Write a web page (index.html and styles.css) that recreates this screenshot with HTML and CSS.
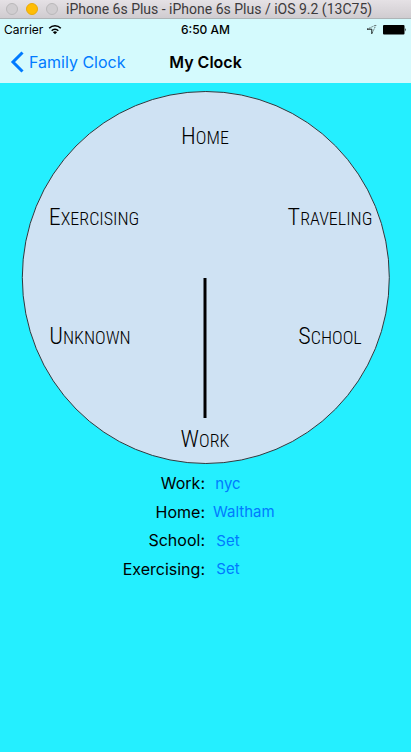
FILE: index.html
```html
<!DOCTYPE html>
<html lang="en">
<head>
<meta charset="utf-8">
<meta name="viewport" content="width=device-width, initial-scale=1">
<title>My Clock</title>
<link rel="stylesheet" href="styles.css">
</head>
<body>
<div class="titlebar">
  <div class="lights"><span class="light"></span><span class="light light-min"></span><span class="light"></span></div>
  <div class="window-title">iPhone 6s Plus - iPhone 6s Plus / iOS 9.2 (13C75)</div>
</div>
<header class="top">
  <div class="status">
    <div class="carrier">
      <span>Carrier</span>
      <svg width="14" height="11" viewBox="0 0 14 11" fill="none" stroke="#000" stroke-width="1.5"><path d="M1.2 4.2C4.4 .8 9.6 .8 12.8 4.2M3.7 6.7C5.500 4.700 8.500 4.700 10.300 6.700"/><path d="M7 10.200L4.900 8.200Q7 6.500 9.100 8.200Z" fill="#000" stroke="none"/></svg>
    </div>
    <time class="time">6:50 AM</time>
    <div class="indicators">
      <svg width="11" height="11" viewBox="0 0 11 11" fill="none" stroke="#000"><path stroke-width=".9" d="M1 5.200H5.800V10"/><path stroke-width=".7" stroke-dasharray="1 1" d="M1 5.200L10 1L5.800 10"/></svg>
      <svg width="24" height="10" viewBox="0 0 24 10"><rect x="0" y="0" width="21.500" height="9.500" rx="1"/><path d="M22.300 3Q23.800 4.700 22.300 6.500Z"/></svg>
    </div>
  </div>
  <nav class="nav">
    <a class="back" href="#">
      <svg width="14" height="22" viewBox="0 0 14 22" fill="none" stroke="#007aff" stroke-width="3"><path d="M12.500 1.500L3 11L12.500 20.500"/></svg>
      <span>Family Clock</span>
    </a>
    <h1 class="title">My Clock</h1>
  </nav>
</header>
<main>
  <svg class="clock" viewBox="0 0 411 382" role="img" aria-label="Family clock">
    <ellipse class="face" cx="205.800" cy="194.500" rx="183.500" ry="186"/>
    <line class="hand" x1="205" y1="195" x2="205" y2="335"/>
    <g class="places">
      <text x="205" y="61"><tspan class="cap">H</tspan>ome</text>
      <text x="94" y="142"><tspan class="cap">E</tspan>xercising</text>
      <text x="330" y="142"><tspan class="cap">T</tspan>raveling</text>
      <text x="90" y="261"><tspan class="cap">U</tspan>nknown</text>
      <text x="330" y="261"><tspan class="cap">S</tspan>chool</text>
      <text x="205" y="364"><tspan class="cap">W</tspan>ork</text>
    </g>
  </svg>
  <div class="settings">
    <label for="work">Work:</label><button id="work">nyc</button>
    <label for="home">Home:</label><button id="home">Waltham</button>
    <label for="school">School:</label><button id="school">Set</button>
    <label for="exercising">Exercising:</label><button id="exercising">Set</button>
  </div>
</main>
</body>
</html>
```
FILE: styles.css
```css
* { box-sizing: border-box; }
body {
  margin: 0;
  min-height: 100vh;
  background: #24efff;
  color: #000;
  font-family: Inter, "Liberation Sans", sans-serif;
}
svg { display: block; flex: none; }
.titlebar {
  display: flex;
  align-items: center;
  height: 19px;
  padding: 0 6px;
  gap: 8px;
  background: linear-gradient(#e5e1e5, #d0ccd0);
  border-bottom: 1px solid #aeb4b6;
}
.lights { display: flex; gap: 8px; }
.light {
  width: 12px;
  height: 12px;
  border-radius: 50%;
  background: #d0cdd0;
  border: 1px solid #bab8ba;
}
.light-min { background: #ffbd05; border-color: #e9aa08; }
.window-title {
  font-family: Roboto, sans-serif;
  font-size: 14px;
  line-height: 18px;
  color: #3c3a3c;
  white-space: nowrap;
}
.top { background: #d4fafd; }
.status, .nav {
  display: grid;
  grid-template-columns: 1fr auto 1fr;
  align-items: center;
}
.status { height: 21px; padding: 0 4px; font-size: 12px; }
.carrier { display: flex; align-items: center; gap: 5px; }
.time { font-weight: 500; }
.indicators { display: flex; justify-content: flex-end; align-items: center; gap: 6px; }
.nav { height: 43px; padding: 0 10px; }
.back {
  display: flex;
  align-items: center;
  gap: 5px;
  color: #007aff;
  font-size: 16px;
  text-decoration: none;
  white-space: nowrap;
}
.title { margin: 0; font-size: 16px; font-weight: 600; }
.clock { width: 100%; height: auto; }
.face { fill: #cfe2f3; stroke: #30383d; stroke-width: 1; }
.hand { stroke: #000; stroke-width: 3; }
.places {
  font-family: "Roboto Condensed", "Liberation Sans Narrow", "Liberation Sans", sans-serif;
  font-size: 18px;
  font-weight: 300;
  fill: #000;
  text-anchor: middle;
  text-transform: uppercase;
}
.cap { font-size: 24px; }
.settings {
  display: grid;
  grid-template-columns: 1fr 1fr;
  grid-auto-rows: 1fr;
  column-gap: 8px;
  align-items: center;
  height: 114px;
  margin-top: 4px;
  margin-left: 7px;
}
.settings label { justify-self: end; font-size: 16px; }
.settings button {
  justify-self: start;
  min-width: 30px;
  padding: 0;
  border: 0;
  background: none;
  color: #007aff;
  font: 15px Inter, "Liberation Sans", sans-serif;
}
```
